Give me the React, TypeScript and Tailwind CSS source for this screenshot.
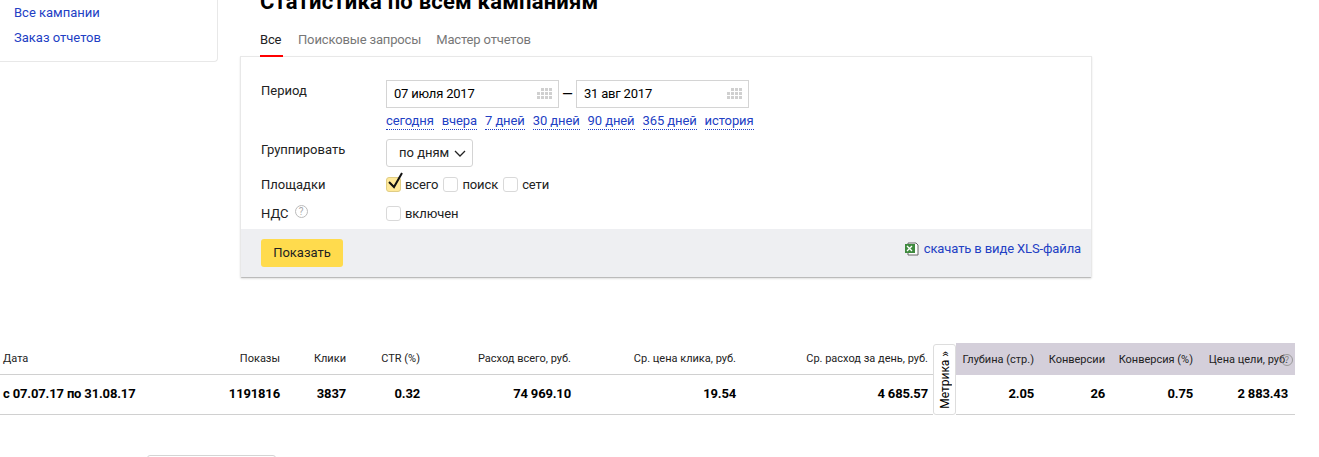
import React from 'react';

const font = "font-['Roboto','Noto_Sans',sans-serif]";

const CalendarIcon: React.FC = () => (
  <svg width="16" height="12" viewBox="0 0 16 12" className="text-[#d0d0d0]" fill="currentColor">
    {[0, 4, 8].map((y) =>
      [0, 4, 8, 12].map((x) =>
        y === 0 && x === 0 ? null : <rect key={`${x}-${y}`} x={x} y={y} width="3" height="3" />
      )
    )}
  </svg>
);

const DateInput: React.FC<{ value: string; width: string }> = ({ value, width }) => (
  <div className={`h-7 ${width} border border-[#d4d4d4] flex items-center justify-between pl-[7px] pr-[5px] text-[13px] tracking-[-0.2px] text-black`}>
    <span>{value}</span>
    <CalendarIcon />
  </div>
);

const Checkbox: React.FC<{ checked?: boolean; label: string }> = ({ checked, label }) => (
  <label className="flex items-center gap-[4px] text-[13px] tracking-[-0.1px] text-[#222]">
    <span className={`relative w-[15px] h-[15px] rounded-[3px] border ${checked ? 'bg-[#ffe999] border-[#e0cd86]' : 'bg-white border-[#d9d9d9]'}`}>
      {checked && (
        <svg width="18" height="20" viewBox="0 0 18 20" className="absolute left-[1px] -top-[8px]" fill="none" stroke="#111" strokeWidth="2">
          <path d="M1 12l5 5 8-14" />
        </svg>
      )}
    </span>
    {label}
  </label>
);

const FormRow: React.FC<{ label: React.ReactNode; className?: string; children: React.ReactNode }> = ({ label, className, children }) => (
  <div className={`flex ${className ?? ''}`}>
    <div className="w-[125px] text-[13px] text-[#222] flex items-start gap-[6px]">{label}</div>
    <div className="flex-1">{children}</div>
  </div>
);

const quickLinks = ['сегодня', 'вчера', '7 дней', '30 дней', '90 дней', '365 дней', 'история'];

const headers = ['Показы', 'Клики', 'CTR (%)', 'Расход всего, руб.', 'Ср. цена клика, руб.', 'Ср. расход за день, руб.'];
const values = ['1191816', '3837', '0.32', '74 969.10', '19.54', '4 685.57'];
const metricHeaders = ['Глубина (стр.)', 'Конверсии', 'Конверсия (%)', 'Цена цели, руб.'];
const metricValues = ['2.05', '26', '0.75', '2 883.43'];

const App: React.FC = () => {
  return (
    <div className={`w-[1319px] h-[457px] overflow-hidden bg-white ${font}`}>
      <div className="flex h-[300px] items-start">
        <aside className="w-[218px] h-[62px] border-r border-b border-[#e8e8e8] rounded-br-[4px] flex flex-col gap-[7px] pl-[14px] pt-[4px] text-[13px] leading-[18px] text-[#2240c4]">
          <a>Все кампании</a>
          <a>Заказ отчетов</a>
        </aside>
        <main className="ml-[22px] w-[852px]">
          <h1 className="-mt-[11px] ml-[20px] h-[31px] text-[22px] tracking-[0.2px] leading-[26px] font-bold text-black">Статистика по всем кампаниям</h1>
          <nav className="ml-[20px] mt-[8px] flex gap-[15px] text-[13px] tracking-[-0.15px] leading-[18px] text-[#777]">
            <span className="w-[23px] h-[29px] pt-[3px] border-b-2 border-[#f00] text-[#222]">Все</span>
            <span className="pt-[3px]">Поисковые запросы</span>
            <span className="pt-[3px]">Мастер отчетов</span>
          </nav>
          <section className="-mt-px h-[222px] border border-[#e8e8e8] border-b-[#bbb] rounded-b-[2px] shadow-[0_1px_2px_rgba(0,0,0,0.12)] flex flex-col">
            <div className="flex-1 pl-[20px] pt-[23px]">
              <FormRow label={<span className="mt-[1px]">Период</span>}>
                <div className="flex items-center">
                  <DateInput value="07 июля 2017" width="w-[173px]" />
                  <span className="w-[17px] text-center text-[14px] text-black">—</span>
                  <DateInput value="31 авг 2017" width="w-[173px]" />
                </div>
                <div className="flex gap-[8px] mt-[5px] text-[13px] tracking-[-0.1px] leading-[16px] text-[#2240c4]">
                  {quickLinks.map((link) => (
                    <a key={link} className="border-b border-dotted border-[#2240c4]">{link}</a>
                  ))}
                </div>
              </FormRow>
              <FormRow className="mt-[9px]" label={<span className="mt-[1px]">Группировать</span>}>
                <button className="h-7 w-[87px] border border-[#d4d4d4] rounded-[3px] text-[13px] text-[#222] flex items-center pl-[12px] gap-[5px]">
                  по дням
                  <svg width="12" height="7" viewBox="0 0 12 7" fill="none" stroke="#222" strokeWidth="1.3"><path d="M1 1l5 5 5-5" /></svg>
                </button>
              </FormRow>
              <FormRow className="mt-[8px] items-center" label="Площадки">
                <div className="flex gap-[5px]">
                  <Checkbox checked label="всего" />
                  <Checkbox label="поиск" />
                  <Checkbox label="сети" />
                </div>
              </FormRow>
              <FormRow className="mt-[9px] items-center" label={
                <>
                  НДС
                  <span className="mt-[1px] w-[13px] h-[13px] rounded-full border border-[#bbb] text-[#aaa] text-[10px] leading-[11px] text-center">?</span>
                </>
              }>
                <Checkbox label="включен" />
              </FormRow>
            </div>
            <div className="h-[48px] bg-[#eeeff2] pl-[20px] pr-[10px] pt-[10px] flex justify-between items-start">
              <button className="h-7 w-[82px] rounded-[3px] bg-[#ffdb4d] text-[13px] text-[#222]">Показать</button>
              <a className="flex items-center gap-[5px] text-[13px] tracking-[-0.12px] leading-[20px] text-[#2240c4]">
                <svg width="14" height="14" viewBox="0 0 14 14">
                  <path d="M3 1h8l2 2v10H3z" fill="#fff" stroke="#666" />
                  <rect x="0" y="2" width="10" height="9" fill="#3f8a3f" />
                  <path d="M2 4l5 5M7 4l-5 5" stroke="#fff" strokeWidth="1.3" />
                </svg>
                скачать в виде XLS-файла
              </a>
            </div>
          </section>
        </main>
      </div>

      <div className="mt-[43px] w-[1295px] grid grid-cols-[210px_70px_66px_74px_151px_165px_197px_23px_78px_71px_88px_102px] grid-rows-[32px_40px] text-[#222]">
        <div className="pl-[3px] pt-[2px] flex items-center text-[11px] border-b border-[#d0d0d0]">Дата</div>
        {headers.map((h, i) => (
          <div key={h} className={`pt-[2px] flex items-center justify-end text-[11px] border-b border-[#d0d0d0] ${i === 5 ? 'pr-[5px]' : ''}`}>{h}</div>
        ))}
        <div className="col-start-8 row-start-1 row-span-2 h-[71px] mt-px border border-[#ddd] rounded-[3px] bg-white flex items-center justify-center z-10">
          <span className="[writing-mode:vertical-rl] rotate-180 text-[12px] leading-none text-black whitespace-nowrap">Метрика »</span>
        </div>
        {metricHeaders.map((h, i) => (
          <div key={h} className={`relative pt-[2px] flex items-center justify-end text-[11px] bg-[#d4cfda] ${i === 3 ? 'pr-[7px]' : ''}`}>
            {h}
            {i === 3 && (
              <span className="absolute right-[2px] top-[11px] w-[12px] h-[12px] rounded-full border border-[#999] text-[#888] text-[9px] leading-[10px] text-center">?</span>
            )}
          </div>
        ))}
        <div className="pl-[3px] pb-[1px] flex items-center text-[13px] tracking-[-0.15px] font-bold text-black border-b border-[#d0d0d0]">с 07.07.17 по 31.08.17</div>
        {values.map((v, i) => (
          <div key={v} className={`pb-[1px] flex items-center justify-end text-[13px] tracking-[-0.15px] font-bold text-black border-b border-[#d0d0d0] ${i === 5 ? 'pr-[5px]' : ''}`}>{v}</div>
        ))}
        {metricValues.map((v, i) => (
          <div key={v} className={`pb-[1px] flex items-center justify-end text-[13px] tracking-[-0.15px] font-bold text-black border-b border-[#d0d0d0] ${i === 3 ? 'pr-[7px]' : ''}`}>{v}</div>
        ))}
      </div>

      <div className="mt-[40px] ml-[147px] w-[129px] h-7 border border-[#d4d4d4] rounded-[3px]" />
    </div>
  );
};

export default App;
